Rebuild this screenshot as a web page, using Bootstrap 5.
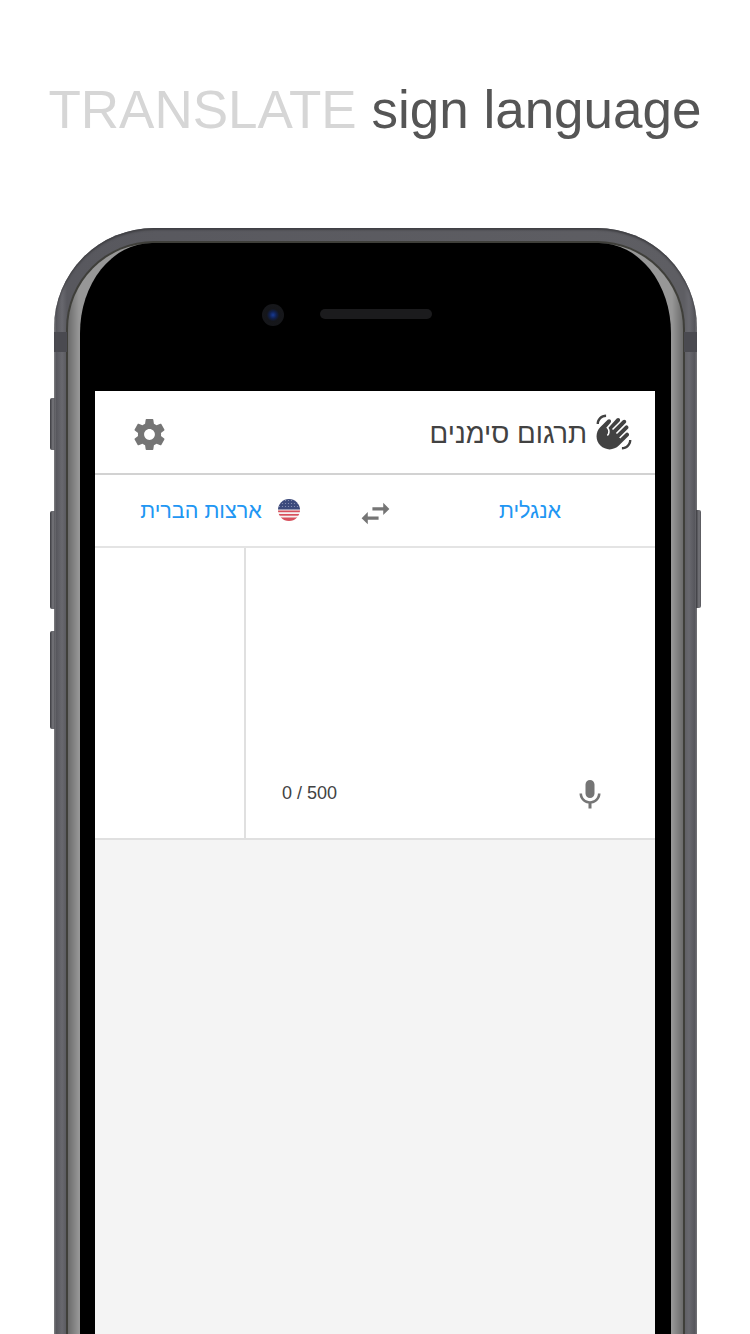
<!DOCTYPE html>
<html lang="he">
<head>
  <meta charset="UTF-8">
  <meta name="viewport" content="width=device-width, initial-scale=1">
  <title>Translate sign language</title>
  <link href="https://cdn.jsdelivr.net/npm/bootstrap@5.3.2/dist/css/bootstrap.min.css" rel="stylesheet">
  <style>
    body {
      background-color: #fff;
      font-family: "Liberation Sans", sans-serif;
    }
    .page-wrap {
      width: 750px;
      height: 1334px;
      overflow: hidden;
    }
    .promo-title {
      height: 228px;
      padding-top: 75px;
      margin: 0;
      font-family: "Liberation Sans", sans-serif;
      font-size: 53px;
      font-weight: 400;
      line-height: 70px;
      text-align: center;
      white-space: nowrap;
      color: #555;
    }
    .promo-title span {
      color: #d6d6d6;
    }
    .phone-outer {
      position: relative;
      width: 643px;
      height: 1200px;
      margin-left: 54px;
      padding: 13px 12px 0;
      border-radius: 100px 100px 0 0;
      background: linear-gradient(90deg, #9a9a9c 0, #56565c 2px, #68686e 8px, #58585e 13px, #5e5e63 calc(100% - 13px), #68686e calc(100% - 8px), #56565c calc(100% - 2px), #8a8a8e 100%);
      box-shadow: inset 0 2px 2px #404044;
    }
    .phone-band {
      position: absolute;
      top: 104px;
      width: 13px;
      height: 20px;
      background-color: #4a4a50;
    }
    .phone-line {
      height: 100%;
      padding: 2px 2px 0;
      border-radius: 88px 88px 0 0;
      background-color: #3f3f3a;
    }
    .phone-glass {
      height: 100%;
      padding: 0 12px;
      border-radius: 86px 86px 0 0;
      background: linear-gradient(90deg, #6b6b6b 0, #979797 11px, #979797 calc(100% - 11px), #6b6b6b 100%);
    }
    .phone-bezel {
      height: 100%;
      padding: 148px 16px 0 15px;
      border-radius: 72px 72px 0 0 / 90px 90px 0 0;
      background-color: #000;
    }
    .phone-camera {
      position: absolute;
      top: 76px;
      left: 208px;
      width: 22px;
      height: 22px;
      border-radius: 50%;
      background: radial-gradient(circle, #173a94 0, #10204f 22%, #15161a 40%, #17181b 100%);
    }
    .phone-speaker {
      position: absolute;
      top: 81px;
      left: 266px;
      width: 112px;
      height: 10px;
      border-radius: 5px;
      background-color: #1b1b1d;
    }
    .side-btn {
      position: absolute;
      width: 5px;
      background: linear-gradient(90deg, #3b3b40, #77777c 60%, #55555a);
    }
    .side-left {
      left: -4px;
      border-radius: 2px 0 0 2px;
    }
    .side-right {
      right: -4px;
      border-radius: 0 2px 2px 0;
    }
    .app-screen {
      height: 100%;
      background-color: #f4f4f4;
    }
    .app-toolbar {
      height: 84px;
      padding-right: 22px;
      background-color: #fff;
      border-bottom: 2px solid #d2d2d2;
    }
    .app-title {
      padding-top: 4px;
      margin-right: 8px;
      font-size: 27.6px;
      color: #424242;
    }
    .settings-btn {
      margin-top: 4px;
      margin-left: 36px;
    }
    .lang-row {
      height: 73px;
      background-color: #fff;
      border-bottom: 2px solid #e4e4e4;
    }
    .lang-tab {
      width: 250px;
      font-size: 21.6px;
      color: #2196f3;
    }
    .lang-label {
      padding-top: 2px;
    }
    .swap-box {
      width: 60px;
      padding-top: 5px;
    }
    .input-area {
      height: 292px;
      background-color: #fff;
      border-bottom: 2px solid #e0e0e0;
    }
    .input-main {
      width: 411px;
      padding: 0 47px 25px 36px;
      border-left: 2px solid #e0e0e0;
    }
    .char-count {
      margin-bottom: 6px;
      font-size: 18px;
      color: #424242;
    }
  </style>
</head>
<body>
  <div class="page-wrap">
    <h1 class="promo-title"><span>TRANSLATE</span> sign language</h1>

    <div class="phone-outer">
      <div class="phone-band" style="left:0"></div>
      <div class="phone-band" style="right:0"></div>
      <div class="side-btn side-left" style="top:170px;height:52px"></div>
      <div class="side-btn side-left" style="top:283px;height:98px"></div>
      <div class="side-btn side-left" style="top:403px;height:98px"></div>
      <div class="side-btn side-right" style="top:282px;height:98px"></div>
      <div class="phone-camera"></div>
      <div class="phone-speaker"></div>

      <div class="phone-line">
        <div class="phone-glass">
          <div class="phone-bezel">
            <div class="app-screen" dir="rtl">
              <div class="app-toolbar d-flex align-items-center justify-content-between">
                <div class="d-flex align-items-center">
                  <svg width="38" height="38" viewBox="0 0 24 24" fill="#424242"><path d="M23 17c0 3.31-2.69 6-6 6v-1.5c2.48 0 4.5-2.02 4.5-4.5H23zM1 7c0-3.31 2.69-6 6-6v1.5C4.52 2.5 2.5 4.52 2.5 7H1zM8.01 4.32l-4.6 4.6c-3.22 3.22-3.22 8.45 0 11.67s8.45 3.22 11.67 0l6.07-6.07c.49-.49.49-1.28 0-1.77-.49-.49-1.28-.49-1.77 0l-3.42 3.42-.71-.71 5.54-5.54c.49-.49.49-1.28 0-1.77s-1.28-.49-1.77 0l-5.13 5.13-.71-.71 6.19-6.19c.49-.49.49-1.28 0-1.77s-1.28-.49-1.77 0l-6.19 6.19-.69-.72 4.78-4.78c.49-.49.49-1.28 0-1.77s-1.28-.49-1.77 0L8.5 9.3c1.22 1.57 1.11 3.84-.33 5.28l-.71-.71c1.17-1.17 1.17-3.07 0-4.24l-.35-.35 2.67-3.19c.49-.49.49-1.28 0-1.77s-1.28-.49-1.77 0z"/></svg>
                  <span class="app-title">תרגום סימנים</span>
                </div>
                <div class="settings-btn d-flex">
                  <svg width="37" height="37" viewBox="0 0 24 24" fill="#757575"><path d="M19.43 12.98c.04-.32.07-.64.07-.98s-.03-.66-.07-.98l2.11-1.65c.19-.15.24-.42.12-.64l-2-3.46c-.12-.22-.39-.3-.61-.22l-2.49 1c-.52-.4-1.08-.73-1.69-.98l-.38-2.65C14.46 2.18 14.25 2 14 2h-4c-.25 0-.46.18-.49.42l-.38 2.65c-.61.25-1.17.59-1.69.98l-2.49-1c-.23-.09-.49 0-.61.22l-2 3.46c-.13.22-.07.49.12.64l2.11 1.65c-.04.32-.07.65-.07.98s.03.66.07.98l-2.11 1.65c-.19.15-.24.42-.12.64l2 3.46c.12.22.39.3.61.22l2.49-1c.52.4 1.08.73 1.69.98l.38 2.65c.03.24.24.42.49.42h4c.25 0 .46-.18.49-.42l.38-2.65c.61-.25 1.17-.59 1.69-.98l2.49 1c.23.09.49 0 .61-.22l2-3.46c.12-.22.07-.49-.12-.64l-2.11-1.65zM12 15.5c-1.93 0-3.5-1.57-3.5-3.5s1.57-3.5 3.5-3.5 3.5 1.57 3.5 3.5-1.57 3.5-3.5 3.5z"/></svg>
                </div>
              </div>

              <div class="lang-row d-flex align-items-center">
                <div class="lang-tab lang-label text-center">אנגלית</div>
                <div class="swap-box d-flex justify-content-center">
                  <svg width="37" height="37" viewBox="0 0 24 24" fill="#757575"><path d="M6.99 11L3 15l3.99 4v-3H14v-2H6.99v-3zM21 9l-3.99-4v3H10v2h7.01v3L21 9z"/></svg>
                </div>
                <div class="lang-tab d-flex align-items-center justify-content-center gap-3">
                  <svg width="22" height="22" viewBox="0 0 22 22">
                    <defs>
                      <clipPath id="flagClip"><circle cx="11" cy="11" r="11"/></clipPath>
                      <pattern id="flagStars" width="3" height="3" patternUnits="userSpaceOnUse"><circle cx="1.5" cy="1.5" r=".6" fill="#8f97b8"/></pattern>
                    </defs>
                    <g clip-path="url(#flagClip)">
                      <rect width="22" height="22" fill="#f6f0f0"/>
                      <rect y="11.5" width="22" height="1.7" fill="#d8505c"/>
                      <rect y="15" width="22" height="1.7" fill="#d8505c"/>
                      <rect y="18.5" width="22" height="3.5" fill="#d8505c"/>
                      <rect width="22" height="10.5" fill="#3b4a7c"/>
                      <rect width="22" height="10.5" fill="url(#flagStars)"/>
                    </g>
                  </svg>
                  <span class="lang-label">ארצות הברית</span>
                </div>
              </div>

              <div class="input-area d-flex">
                <div class="input-main d-flex align-items-end justify-content-between">
                  <svg width="36" height="36" viewBox="0 0 24 24" fill="#757575"><path d="M12 14c1.66 0 3-1.34 3-3V5c0-1.66-1.34-3-3-3S9 3.34 9 5v6c0 1.66 1.34 3 3 3zm5.3-3c0 3-2.54 5.1-5.3 5.1S6.7 14 6.7 11H5c0 3.41 2.72 6.23 6 6.72V21h2v-3.28c3.28-.48 6-3.3 6-6.72h-1.7z"/></svg>
                  <span class="char-count" dir="ltr">0 / 500</span>
                </div>
                <div class="flex-grow-1"></div>
              </div>
            </div>
          </div>
        </div>
      </div>
    </div>
  </div>
  <script src="https://cdn.jsdelivr.net/npm/bootstrap@5.3.2/dist/js/bootstrap.bundle.min.js"></script>
</body>
</html>
